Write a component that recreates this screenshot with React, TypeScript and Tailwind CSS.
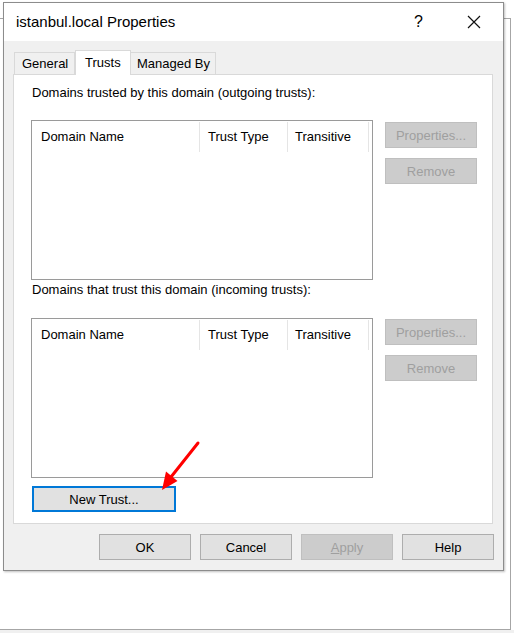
import { ReactNode } from "react";

const TrustList = () => (
  <div className="w-[342px] h-[160px] border border-[#9a9a9a] bg-white">
    <div className="flex h-[32px] items-stretch">
      <div className="w-[168px] flex items-center pl-[9px] border-r border-[#e5e5e5] my-[1px]">Domain Name</div>
      <div className="w-[88px] flex items-center pl-[8px] border-r border-[#e5e5e5] my-[1px]">Trust Type</div>
      <div className="w-[81px] flex items-center pl-[7px] border-r border-[#e5e5e5] my-[1px]">Transitive</div>
    </div>
  </div>
);

const Button = ({ children, disabled, focused, className = "" }: { children: ReactNode; disabled?: boolean; focused?: boolean; className?: string }) => {
  let look = "bg-[#e1e1e1] border border-[#adadad] text-black";
  if (disabled) look = "bg-[#cccccc] border border-[#bfbfbf] text-[#9f9f9f]";
  if (focused) look = "bg-[#e1e1e1] border-2 border-[#0078d7] text-black";
  return (
    <div className={`h-[26px] flex items-center justify-center leading-none ${look} ${className}`}>
      {children}
    </div>
  );
};

const SideButtons = () => (
  <div className="flex flex-col gap-[10px] ml-[12px]">
    <Button disabled className="w-[92px]">Properties...</Button>
    <Button disabled className="w-[92px]">Remove</Button>
  </div>
);

export default function App() {
  return (
    <div className="relative w-[514px] h-[633px] bg-white overflow-hidden font-['Liberation_Sans',Arial,sans-serif] text-[13px] text-black">
      {/* window behind the dialog */}
      <div className="mt-[18px] h-[612px] w-[511px] border-t border-r border-b border-[#a6a6a6]" />
      <div className="h-[3px] bg-[#f0f0f0]" />

      {/* dialog */}
      <div className="absolute left-[3px] top-[2px] w-[501px] h-[569px] border border-[#8c8c8c] bg-[#f0f0f0] shadow-[1px_1px_2px_rgba(0,0,0,0.25)] flex flex-col">
        <div className="h-[38px] bg-white flex items-center pl-[12px] pb-[1px] shrink-0">
          <span className="text-[15px] leading-none">istanbul.local Properties</span>
          <span className="ml-auto text-[16px] leading-none mr-[44px]">?</span>
          <svg width="14" height="14" viewBox="0 0 14 14" className="mr-[22px]">
            <path d="M1 1 L13 13 M13 1 L1 13" stroke="#111" strokeWidth="1.2" />
          </svg>
        </div>

        <div className="pl-[9px] pt-[8px]">
          {/* tabs */}
          <div className="flex items-end h-[25px] relative z-10">
            <div className="ml-[1px] w-[61px] h-[22px] border border-b-0 border-[#d9d9d9] bg-[#f0f0f0] flex items-center pl-[7px]">General</div>
            <div className="w-[56px] h-[25px] -mb-px border border-b-0 border-[#d9d9d9] bg-white flex items-start pt-[2px] pl-[9px]">Trusts</div>
            <div className="w-[85px] h-[22px] border border-b-0 border-l-0 border-[#d9d9d9] bg-[#f0f0f0] flex items-center pl-[6px]">Managed By</div>
          </div>

          {/* tab panel */}
          <div className="w-[480px] h-[450px] border border-[#d9d9d9] bg-white pl-[17px] pt-[10px]">
            <div className="leading-[15px] pl-[1px]">Domains trusted by this domain (outgoing trusts):</div>
            <div className="flex items-start mt-[20px]">
              <TrustList />
              <div className="mt-[2px]">
                <SideButtons />
              </div>
            </div>
            <div className="leading-[15px] mt-[2px] pl-[1px]">Domains that trust this domain (incoming trusts):</div>
            <div className="flex items-start mt-[21px]">
              <TrustList />
              <div className="mt-[1px]">
                <SideButtons />
              </div>
            </div>
            <Button focused className="w-[144px] mt-[8px] ml-[1px]">New Trust...</Button>
          </div>
        </div>

        <div className="flex justify-end gap-[9px] pr-[9px] mt-[10px]">
          <Button className="w-[92px]">OK</Button>
          <Button className="w-[92px]">Cancel</Button>
          <Button disabled className="w-[92px]"><span><span className="underline">A</span>pply</span></Button>
          <Button className="w-[92px]">Help</Button>
        </div>
      </div>

      {/* annotation arrow */}
      <svg className="absolute left-0 top-0 pointer-events-none" width="514" height="633">
        <line x1="198" y1="443" x2="171" y2="477" stroke="#ff0000" strokeWidth="3" strokeLinecap="round" />
        <polygon points="162,490 177.5,481 166,471.5" fill="#ff0000" />
      </svg>
    </div>
  );
}
